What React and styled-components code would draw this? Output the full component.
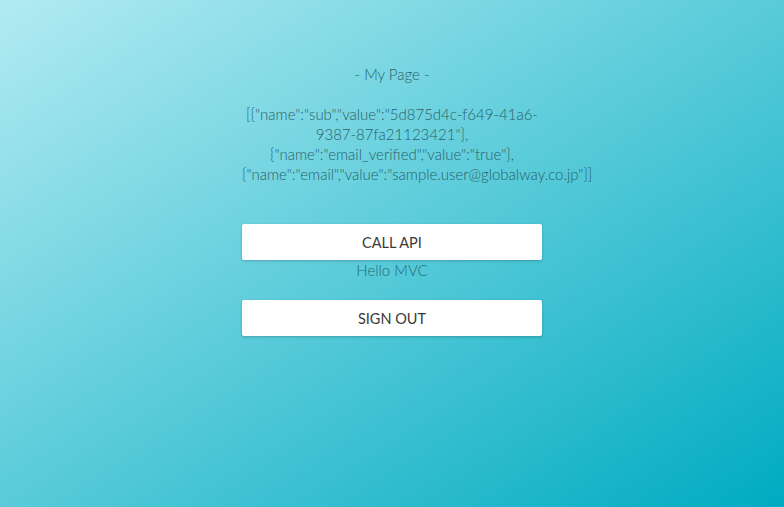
import React from "react";
import styled, { createGlobalStyle } from "styled-components";

const GlobalStyle = createGlobalStyle`
  html, body {
    margin: 0;
    padding: 0;
    height: 100%;
  }
  body {
    font-family: "Lato", "Open Sans", sans-serif;
    font-weight: 300;
    background: linear-gradient(to bottom right, #b2ebf2, #00abc1);
    background-attachment: fixed;
  }
`;

const attributes = [
  '[{"name":"sub","value":"5d875d4c-f649-41a6-9387-87fa21123421"},',
  '{"name":"email_verified","value":"true"},',
  '{"name":"email","value":"sample.user@globalway.co.jp"}]',
];

const App = () => {
  return (
    <>
      <GlobalStyle />
      <Page>
        <Column>
          <Title>- My Page -</Title>
          <Attrs>
            {attributes.map((line) => (
              <div key={line}>{line}</div>
            ))}
          </Attrs>
          <Actions>
            <Button>CALL API</Button>
            <Message>Hello MVC</Message>
            <Button $gap>SIGN OUT</Button>
          </Actions>
        </Column>
      </Page>
    </>
  );
};

const Page = styled.div`
  min-height: 100vh;
  padding-top: 64px;
  box-sizing: border-box;
`;

const Column = styled.div`
  width: 300px;
  margin: 0 auto;
  text-align: center;
  color: #2a626a;
  font-size: 15px;
  line-height: 20px;
`;

const Title = styled.div`
  margin-bottom: 20px;
`;

const Attrs = styled.div`
  white-space: normal;
`;

const Actions = styled.div`
  display: flex;
  flex-direction: column;
  margin-top: 40px;
`;

const Button = styled.button`
  width: 300px;
  height: 36px;
  border: none;
  border-radius: 2px;
  background: #fff;
  box-shadow: 0 1px 3px rgba(0, 0, 0, 0.22);
  font-family: "Lato", "Open Sans", sans-serif;
  font-weight: 400;
  font-size: 14.5px;
  color: #3a3a3a;
  cursor: pointer;
  margin-top: ${(p) => (p.$gap ? "20px" : "0")};
`;

const Message = styled.div`
  color: #226a74;
  line-height: 20px;
`;

export default App;
